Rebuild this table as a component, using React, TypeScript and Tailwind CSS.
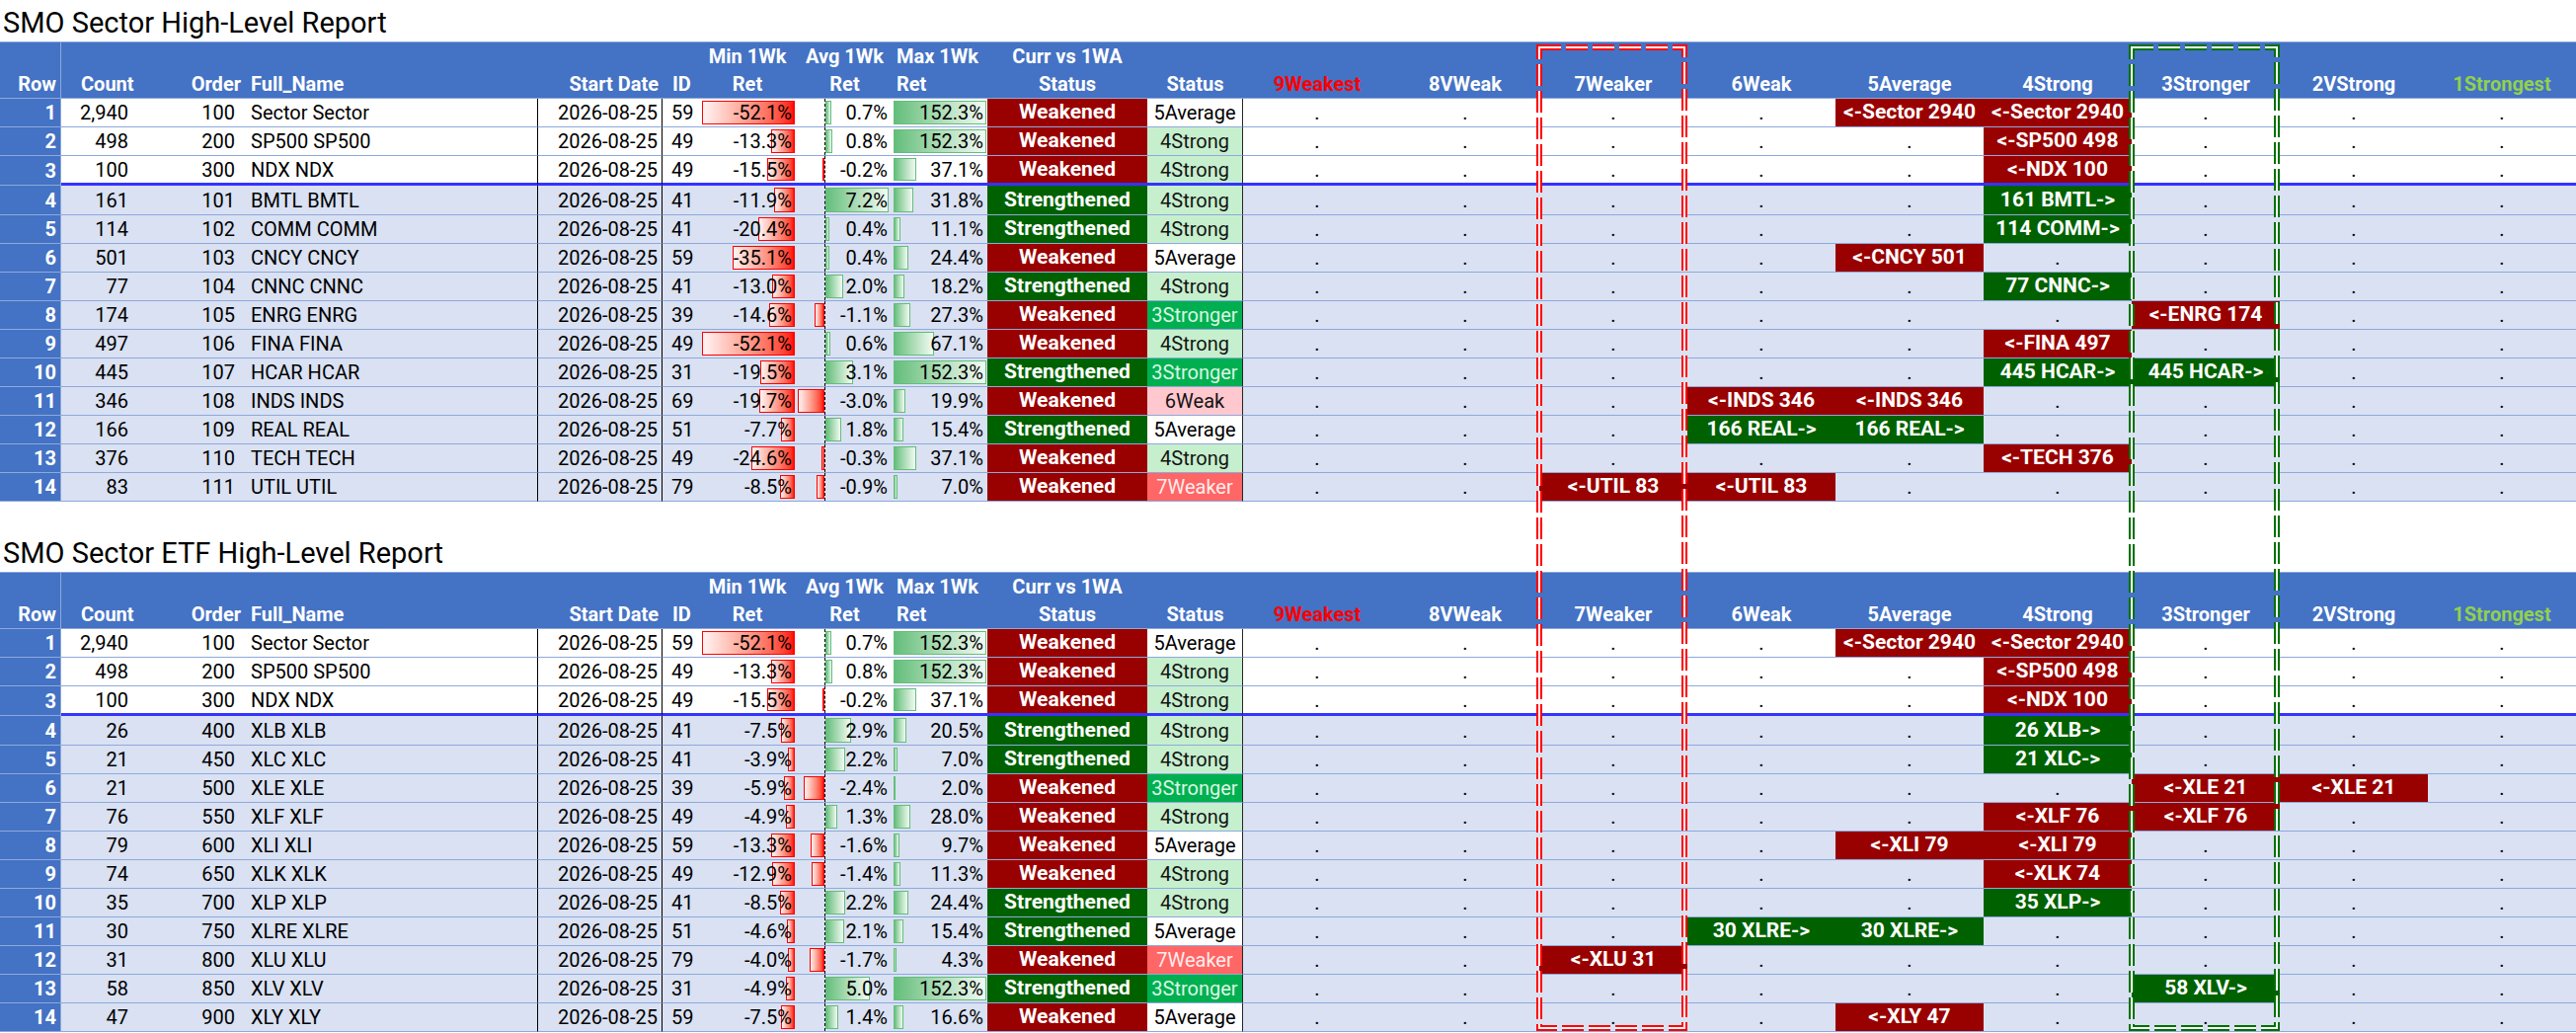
import React from "react";

type Curr = "Weakened" | "Strengthened";

type RowData = {
  count: string;
  order: number;
  name: string;
  id: number;
  min: number;
  avg: number;
  max: number;
  curr: Curr;
  status: string;
  buckets: Record<number, string>;
};

const r = (
  count: string,
  order: number,
  name: string,
  id: number,
  min: number,
  avg: number,
  max: number,
  curr: Curr,
  status: string,
  buckets: Record<number, string>,
): RowData => ({ count, order, name, id, min, avg, max, curr, status, buckets });

const indexRows: RowData[] = [
  r("2,940", 100, "Sector Sector", 59, -52.1, 0.7, 152.3, "Weakened", "5Average", { 4: "<-Sector 2940", 5: "<-Sector 2940" }),
  r("498", 200, "SP500 SP500", 49, -13.3, 0.8, 152.3, "Weakened", "4Strong", { 5: "<-SP500 498" }),
  r("100", 300, "NDX NDX", 49, -15.5, -0.2, 37.1, "Weakened", "4Strong", { 5: "<-NDX 100" }),
];

const sectorRows: RowData[] = [
  ...indexRows,
  r("161", 101, "BMTL BMTL", 41, -11.9, 7.2, 31.8, "Strengthened", "4Strong", { 5: "161 BMTL->" }),
  r("114", 102, "COMM COMM", 41, -20.4, 0.4, 11.1, "Strengthened", "4Strong", { 5: "114 COMM->" }),
  r("501", 103, "CNCY CNCY", 59, -35.1, 0.4, 24.4, "Weakened", "5Average", { 4: "<-CNCY 501" }),
  r("77", 104, "CNNC CNNC", 41, -13.0, 2.0, 18.2, "Strengthened", "4Strong", { 5: "77 CNNC->" }),
  r("174", 105, "ENRG ENRG", 39, -14.6, -1.1, 27.3, "Weakened", "3Stronger", { 6: "<-ENRG 174" }),
  r("497", 106, "FINA FINA", 49, -52.1, 0.6, 67.1, "Weakened", "4Strong", { 5: "<-FINA 497" }),
  r("445", 107, "HCAR HCAR", 31, -19.5, 3.1, 152.3, "Strengthened", "3Stronger", { 5: "445 HCAR->", 6: "445 HCAR->" }),
  r("346", 108, "INDS INDS", 69, -19.7, -3.0, 19.9, "Weakened", "6Weak", { 3: "<-INDS 346", 4: "<-INDS 346" }),
  r("166", 109, "REAL REAL", 51, -7.7, 1.8, 15.4, "Strengthened", "5Average", { 3: "166 REAL->", 4: "166 REAL->" }),
  r("376", 110, "TECH TECH", 49, -24.6, -0.3, 37.1, "Weakened", "4Strong", { 5: "<-TECH 376" }),
  r("83", 111, "UTIL UTIL", 79, -8.5, -0.9, 7.0, "Weakened", "7Weaker", { 2: "<-UTIL 83", 3: "<-UTIL 83" }),
];

const etfRows: RowData[] = [
  ...indexRows,
  r("26", 400, "XLB XLB", 41, -7.5, 2.9, 20.5, "Strengthened", "4Strong", { 5: "26 XLB->" }),
  r("21", 450, "XLC XLC", 41, -3.9, 2.2, 7.0, "Strengthened", "4Strong", { 5: "21 XLC->" }),
  r("21", 500, "XLE XLE", 39, -5.9, -2.4, 2.0, "Weakened", "3Stronger", { 6: "<-XLE 21", 7: "<-XLE 21" }),
  r("76", 550, "XLF XLF", 49, -4.9, 1.3, 28.0, "Weakened", "4Strong", { 5: "<-XLF 76", 6: "<-XLF 76" }),
  r("79", 600, "XLI XLI", 59, -13.3, -1.6, 9.7, "Weakened", "5Average", { 4: "<-XLI 79", 5: "<-XLI 79" }),
  r("74", 650, "XLK XLK", 49, -12.9, -1.4, 11.3, "Weakened", "4Strong", { 5: "<-XLK 74" }),
  r("35", 700, "XLP XLP", 41, -8.5, 2.2, 24.4, "Strengthened", "4Strong", { 5: "35 XLP->" }),
  r("30", 750, "XLRE XLRE", 51, -4.6, 2.1, 15.4, "Strengthened", "5Average", { 3: "30 XLRE->", 4: "30 XLRE->" }),
  r("31", 800, "XLU XLU", 79, -4.0, -1.7, 4.3, "Weakened", "7Weaker", { 2: "<-XLU 31" }),
  r("58", 850, "XLV XLV", 31, -4.9, 5.0, 152.3, "Strengthened", "3Stronger", { 6: "58 XLV->" }),
  r("47", 900, "XLY XLY", 59, -7.5, 1.4, 16.6, "Weakened", "5Average", { 4: "<-XLY 47" }),
];

const bucketNames = ["9Weakest", "8VWeak", "7Weaker", "6Weak", "5Average", "4Strong", "3Stronger", "2VStrong", "1Strongest"];

const bucketHeadColor = ["text-[#FF0000]", "text-white", "text-white", "text-white", "text-white", "text-white", "text-white", "text-white", "text-[#92D050]"];

const statusStyle: Record<string, string> = {
  "5Average": "bg-white text-black",
  "4Strong": "bg-[#C6EFCE] text-[#141414]",
  "3Stronger": "bg-[#00B050] text-[#DDF6E4]",
  "6Weak": "bg-[#FFC7CE] text-[#141414]",
  "7Weaker": "bg-[#FF6666] text-[#FFECEC]",
};

const fmt = (v: number) => `${v.toFixed(1)}%`;

const cell = "shrink-0 h-full flex items-center whitespace-nowrap";

function HeaderRow() {
  const cols = [
    { w: "w-[62px] border-r border-[#8EA9DB]", l2: "Row", cls: "justify-end pr-[4px]" },
    { w: "w-[78px]", l2: "Count", cls: "justify-start pl-[20px]" },
    { w: "w-[108px]", l2: "Order", cls: "justify-end pr-[4px]" },
    { w: "w-[296px]", l2: "Full_Name", cls: "justify-start pl-[6px]" },
    { w: "w-[127px]", l2: "Start Date", cls: "justify-end pr-[4px]" },
    { w: "w-[35px]", l2: "ID", cls: "justify-start pl-[10px]" },
    { w: "w-[102px]", l1: "Min 1Wk", l2: "Ret", cls: "justify-center" },
    { w: "w-[95px]", l1: "Avg 1Wk", l2: "Ret", cls: "justify-center" },
    { w: "w-[97px]", l1: "Max 1Wk", l2: "Ret", cls: "justify-start pl-[5px]" },
    { w: "w-[162px]", l1: "Curr vs 1WA", l2: "Status", cls: "justify-center" },
    { w: "w-[97px]", l2: "Status", cls: "justify-center" },
  ];

  return (
    <div className="flex h-[58px] bg-[#4472C4] border-y border-[#8EA9DB] font-bold text-white">
      {cols.map((c, i) => (
        <div key={i} className={`shrink-0 flex flex-col ${c.w}`}>
          <div className={`h-[28px] flex items-center whitespace-nowrap ${c.cls}`}>{c.l1 ?? ""}</div>
          <div className={`h-[28px] flex items-center whitespace-nowrap ${c.cls}`}>{c.l2}</div>
        </div>
      ))}
      {bucketNames.map((b, i) => (
        <div key={b} className="shrink-0 w-[150px] flex flex-col">
          <div className="h-[28px]" />
          <div className={`h-[28px] flex items-center justify-center ${bucketHeadColor[i]}`}>{b}</div>
        </div>
      ))}
    </div>
  );
}

function DataRow({ row, idx }: { row: RowData; idx: number }) {
  // rows 3 and 4 are a pixel taller in the sheet; row 3 carries the blue divider
  const height = idx === 3 || idx === 4 ? "h-[30px]" : "h-[29px]";
  const line = idx === 3 ? "border-b-[3px] border-[#3434FF]" : "border-b border-[#8EA9DB]";
  const bg = idx <= 3 ? "bg-white" : "bg-[#D9E1F2]";
  const minW = Math.max(2, (Math.abs(row.min) / 52.1) * 94);
  const avgW = Math.max(2, Math.abs(row.avg) * 8.95);
  const maxW = Math.max(2, (row.max / 152.3) * 94);

  return (
    <div className={`flex ${height} ${bg}`}>
      <div className={`${cell} w-[62px] bg-[#4472C4] border-b border-r border-[#8EA9DB] justify-end pr-[4px] font-bold text-white`}>
        {idx}
      </div>
      <div className={`${cell} ${line} w-[78px] justify-end pr-[10px]`}>{row.count}</div>
      <div className={`${cell} ${line} w-[108px] justify-end pr-[10px]`}>{row.order}</div>
      <div className={`${cell} ${line} w-[296px] pl-[6px]`}>{row.name}</div>
      <div className={`${cell} ${line} w-[127px] justify-end pr-[4px] border-x border-x-black`}>2026-08-25</div>
      <div className={`${cell} ${line} w-[35px] pl-[9px]`}>{row.id}</div>

      <div className={`${cell} ${line} relative w-[102px] justify-end pr-[6px]`}>
        <div
          className="absolute right-[3px] top-[2px] bottom-[2px] border border-[#FF0000] bg-linear-to-r from-[#FFF4F4] to-[#FF0000]"
          style={{ width: minW }}
        />
        <span className="relative">{fmt(row.min)}</span>
      </div>

      <div className={`${cell} ${line} relative w-[95px] justify-end pr-[4px]`}>
        {row.avg >= 0 ? (
          <div
            className="absolute left-[28px] top-[2px] bottom-[2px] border border-[#63BE7B] bg-linear-to-r from-[#63BE7B] to-[#F2FAF4]"
            style={{ width: avgW }}
          />
        ) : (
          <div
            className="absolute right-[68px] top-[2px] bottom-[2px] border border-[#FF0000] bg-linear-to-r from-[#FFF4F4] to-[#FF0000]"
            style={{ width: avgW }}
          />
        )}
        <div className="absolute left-[27px] top-0 bottom-0 border-l border-dashed border-black" />
        <span className="relative">{fmt(row.avg)}</span>
      </div>

      <div className={`${cell} ${line} relative w-[97px] justify-end pr-[4px]`}>
        <div
          className="absolute left-[2px] top-[2px] bottom-[2px] border border-[#63BE7B] bg-linear-to-r from-[#63BE7B] to-[#F2FAF4]"
          style={{ width: maxW }}
        />
        <span className="relative">{fmt(row.max)}</span>
      </div>

      <div
        className={`${cell} ${line} w-[162px] justify-center text-[21px] font-bold text-white ${
          row.curr === "Weakened" ? "bg-[#990000]" : "bg-[#006100]"
        }`}
      >
        {row.curr}
      </div>
      <div className={`${cell} ${line} w-[97px] justify-center border-r border-r-[#262626] ${statusStyle[row.status]}`}>
        {row.status}
      </div>

      {bucketNames.map((b, i) => {
        const text = row.buckets[i];
        if (!text) {
          return (
            <div key={b} className={`${cell} ${line} w-[150px] justify-center`}>
              .
            </div>
          );
        }
        const fill = text.startsWith("<-") ? "bg-[#990000]" : "bg-[#006100]";
        return (
          <div key={b} className={`${cell} ${line} w-[150px] justify-center text-[21px] font-bold text-white ${fill}`}>
            {text}
          </div>
        );
      })}
    </div>
  );
}

function Report({ title, rows }: { title: string; rows: RowData[] }) {
  return (
    <section>
      <div className="h-[42px] pt-[7px] pl-[3px] text-[29px] leading-[33px]">{title}</div>
      <HeaderRow />
      {rows.map((row, i) => (
        <DataRow key={row.name} row={row} idx={i + 1} />
      ))}
    </section>
  );
}

function DoubleDash({ x, color }: { x: number; color: string }) {
  return (
    <g fill="none">
      <rect x={x} y={48} width={147} height={993} stroke={color} strokeWidth={6} strokeDasharray="22 5" />
      <rect x={x} y={48} width={147} height={993} stroke="#ffffff" strokeWidth={2} strokeDasharray="22 5" />
    </g>
  );
}

export default function App() {
  return (
    <div className="relative w-[2609px] h-[1046px] overflow-hidden bg-white font-[Roboto,sans-serif] text-[20px] text-black">
      <Report title="SMO Sector High-Level Report" rows={sectorRows} />
      <div className="h-[29px]" />
      <Report title="SMO Sector ETF High-Level Report" rows={etfRows} />

      <svg className="pointer-events-none absolute left-0 top-0" width={2609} height={1046}>
        <DoubleDash x={1559} color="#FF0000" />
        <DoubleDash x={2159} color="#007000" />
      </svg>
    </div>
  );
}
